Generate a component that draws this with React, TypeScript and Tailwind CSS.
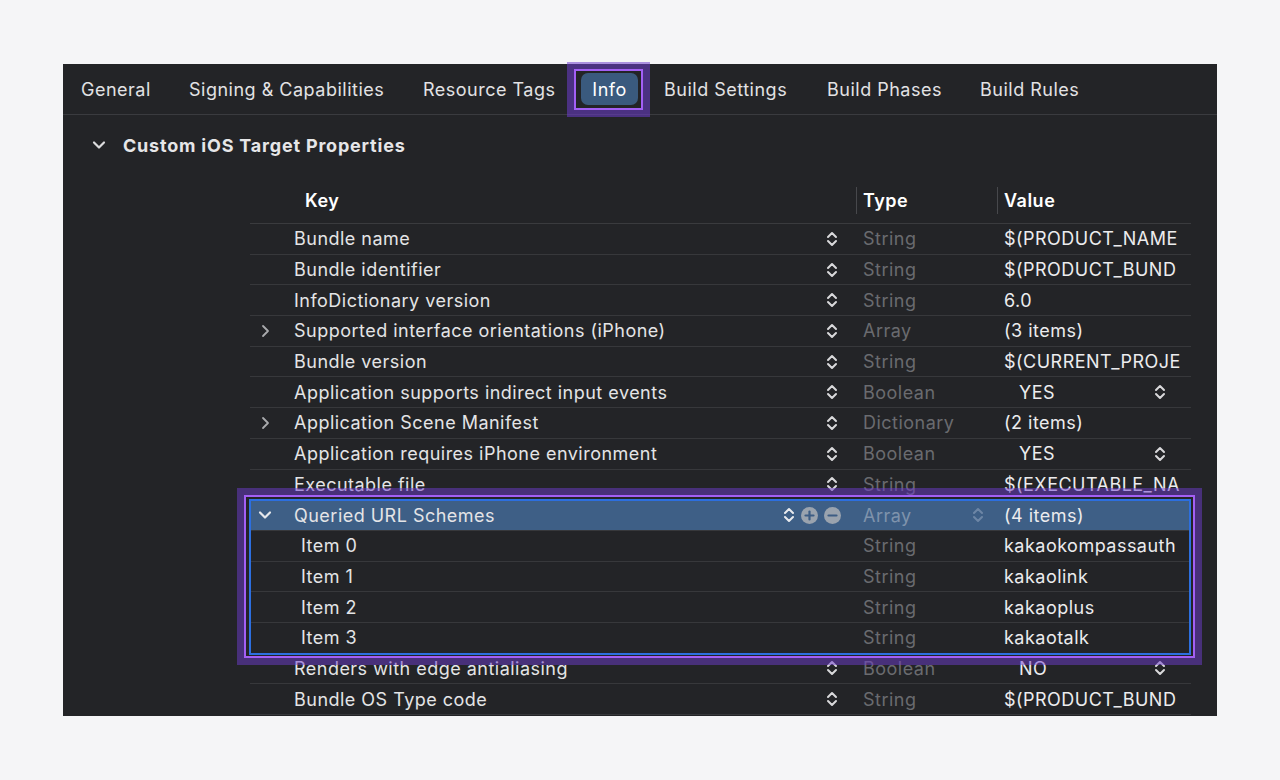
import React from "react";

const Stepper = ({ color = "#d9d9db" }: { color?: string }) => (
  <svg width="12" height="18" viewBox="0 0 12 18" className="shrink-0">
    <path
      d="M2 7 L6 3 L10 7 M2 11 L6 15 L10 11"
      fill="none"
      stroke={color}
      strokeWidth="2"
      strokeLinecap="round"
      strokeLinejoin="round"
    />
  </svg>
);

const ChevronDown = ({ color = "#dcdcde" }: { color?: string }) => (
  <svg width="14" height="10" viewBox="0 0 14 10" className="shrink-0">
    <path d="M2 2.5 L7 7.5 L12 2.5" fill="none" stroke={color} strokeWidth="2.2" strokeLinecap="round" strokeLinejoin="round" />
  </svg>
);

const ChevronRight = ({ color = "#a9aaad" }: { color?: string }) => (
  <svg width="10" height="14" viewBox="0 0 10 14" className="shrink-0">
    <path d="M3 2 L8 7 L3 12" fill="none" stroke={color} strokeWidth="1.8" strokeLinecap="round" strokeLinejoin="round" />
  </svg>
);

const CircleBtn = ({ plus }: { plus?: boolean }) => (
  <svg width="17" height="17" viewBox="0 0 17 17" className="shrink-0">
    <circle cx="8.5" cy="8.5" r="8.5" fill="#9aa3ae" />
    <path d="M4.5 8.5 H12.5" stroke="#3d5d84" strokeWidth="2.2" strokeLinecap="round" />
    {plus && <path d="M8.5 4.5 V12.5" stroke="#3d5d84" strokeWidth="2.2" strokeLinecap="round" />}
  </svg>
);

type Row = {
  key: string;
  type: string;
  value: string;
  disclosure?: "right" | "down";
  item?: boolean;
  bool?: boolean;
  selected?: boolean;
};

const rows: Row[] = [
  { key: "Bundle name", type: "String", value: "$(PRODUCT_NAME" },
  { key: "Bundle identifier", type: "String", value: "$(PRODUCT_BUND" },
  { key: "InfoDictionary version", type: "String", value: "6.0" },
  { key: "Supported interface orientations (iPhone)", type: "Array", value: "(3 items)", disclosure: "right" },
  { key: "Bundle version", type: "String", value: "$(CURRENT_PROJE" },
  { key: "Application supports indirect input events", type: "Boolean", value: "YES", bool: true },
  { key: "Application Scene Manifest", type: "Dictionary", value: "(2 items)", disclosure: "right" },
  { key: "Application requires iPhone environment", type: "Boolean", value: "YES", bool: true },
  { key: "Executable file", type: "String", value: "$(EXECUTABLE_NA" },
  { key: "Queried URL Schemes", type: "Array", value: "(4 items)", disclosure: "down", selected: true },
  { key: "Item 0", type: "String", value: "kakaokompassauth", item: true },
  { key: "Item 1", type: "String", value: "kakaolink", item: true },
  { key: "Item 2", type: "String", value: "kakaoplus", item: true },
  { key: "Item 3", type: "String", value: "kakaotalk", item: true },
  { key: "Renders with edge antialiasing", type: "Boolean", value: "NO", bool: true },
  { key: "Bundle OS Type code", type: "String", value: "$(PRODUCT_BUND" },
];

function TableRow({ r }: { r: Row }) {
  return (
    <div
      className={`flex h-[30.7px] shrink-0 items-center border-b border-[#37383b] ${
        r.selected ? "bg-[#3e5f86]" : ""
      }`}
    >
      <div className="flex h-full w-[606px] shrink-0 items-center pr-[18px]">
        <div className="flex w-[44px] shrink-0 items-center pl-[8px]">
          {r.disclosure === "right" && (
            <div className="flex w-[14px] justify-center">
              <ChevronRight />
            </div>
          )}
          {r.disclosure === "down" && <ChevronDown color="#e6e8ec" />}
        </div>
        <div className={`flex-1 truncate text-[18px] tracking-[0.48px] text-[#e4e4e6] ${r.item ? "pl-[7px]" : ""}`}>
          {r.key}
        </div>
        {r.selected ? (
          <div className="flex items-center">
            <Stepper color="#e8eaee" />
            <div className="ml-[6px]">
              <CircleBtn plus />
            </div>
            <div className="ml-[6px] mr-[-3px]">
              <CircleBtn />
            </div>
          </div>
        ) : r.item ? null : (
          <Stepper />
        )}
      </div>
      <div className="flex h-full w-[141px] shrink-0 items-center justify-between pl-[7px] pr-[13px]">
        <span className={`text-[18px] tracking-[0.48px] ${r.selected ? "text-[#7f93ac]" : "text-[#6a6b6f]"}`}>
          {r.type}
        </span>
        {r.selected && <Stepper color="#6d86a6" />}
      </div>
      <div
        className={`flex h-full w-[194px] shrink-0 items-center justify-between overflow-hidden ${
          r.bool ? "pl-[22px] pr-[25px]" : "pl-[7px]"
        }`}
      >
        <span className="whitespace-nowrap text-[18px] tracking-[0.48px] text-[#ececee]">{r.value}</span>
        {r.bool && <Stepper />}
      </div>
    </div>
  );
}

export default function App() {
  const tabs: { label: string; w: string }[] = [
    { label: "General", w: "w-[108px]" },
    { label: "Signing & Capabilities", w: "w-[234px]" },
    { label: "Resource Tags", w: "w-[158px]" },
  ];
  return (
    <div
      className="relative h-[780px] w-[1280px] overflow-hidden bg-[#f5f5f7] pl-[63px] pt-[64px]"
      style={{ fontFamily: "Inter, 'Noto Sans', 'Liberation Sans', sans-serif" }}
    >
      <div className="flex h-[652px] w-[1154px] flex-col overflow-hidden bg-[#232427]">
        {/* Tabs */}
        <div className="flex h-[51px] shrink-0 items-center border-b border-[#3a3b3f] pl-[18px] text-[18px] tracking-[0.5px] text-[#e2e2e4]">
          {tabs.map((t) => (
            <div key={t.label} className={`${t.w} shrink-0 whitespace-nowrap`}>
              {t.label}
            </div>
          ))}
          <div className="flex h-[32px] w-[57px] shrink-0 items-center justify-center rounded-[7px] bg-[#3a5a7e] text-white">
            Info
          </div>
          <div className="w-[26px] shrink-0" />
          <div className="w-[163px] shrink-0 whitespace-nowrap">Build Settings</div>
          <div className="w-[153px] shrink-0 whitespace-nowrap">Build Phases</div>
          <div className="shrink-0 whitespace-nowrap">Build Rules</div>
        </div>

        {/* Section header */}
        <div className="flex h-[60px] shrink-0 items-center pl-[29px]">
          <ChevronDown />
          <span className="ml-[17px] text-[18px] font-bold tracking-[0.8px] text-[#e6e6e8]">
            Custom iOS Target Properties
          </span>
        </div>

        {/* Table */}
        <div className="ml-[187px] flex w-[941px] flex-col">
          <div className="flex h-[49px] shrink-0 items-center border-b border-[#3a3b3e] pt-[2px] text-[18px] font-semibold tracking-[0.5px] text-white">
            <div className="w-[606px] shrink-0 pl-[55px]">Key</div>
            <div className="flex h-[27px] w-[141px] shrink-0 items-center border-l border-[#47484c] pl-[6px]">Type</div>
            <div className="flex h-[27px] w-[194px] shrink-0 items-center border-l border-[#47484c] pl-[6px]">Value</div>
          </div>
          {rows.map((r) => (
            <TableRow key={r.key} r={r} />
          ))}
        </div>
      </div>

      {/* Selection focus ring */}
      <div className="pointer-events-none absolute left-[249px] top-[499px] h-[156px] w-[942px] border-2 border-[#2c6fe0]" />

      {/* Purple annotation: rows */}
      <div className="pointer-events-none absolute left-[237px] top-[488px] h-[177px] w-[965px] border-[7px] border-[rgba(110,60,205,0.5)]">
        <div className="absolute inset-0 border-2 border-[#a35ff5]" />
      </div>

      {/* Purple annotation: Info tab */}
      <div className="pointer-events-none absolute left-[567px] top-[62px] h-[55px] w-[83px] border-[7px] border-[rgba(110,60,205,0.55)]">
        <div className="absolute inset-0 border-2 border-[#a35ff5]" />
      </div>
    </div>
  );
}
